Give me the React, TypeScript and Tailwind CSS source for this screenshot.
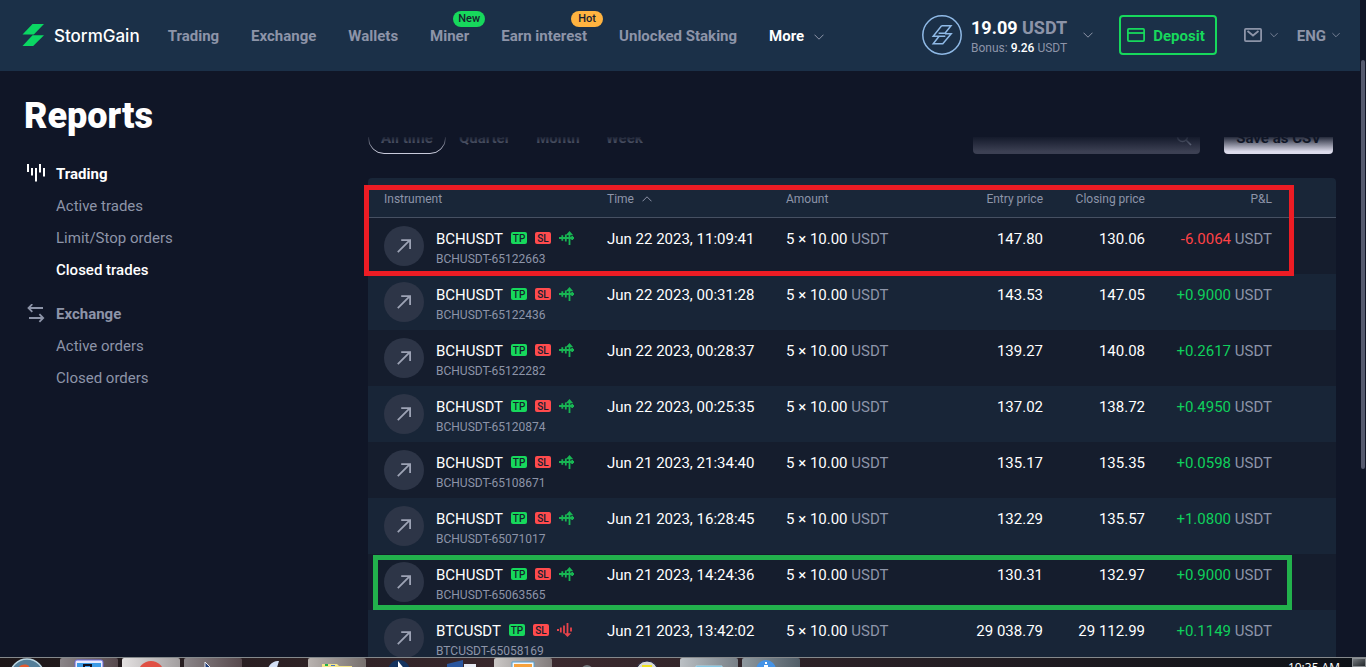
import type { ReactNode } from 'react'

interface Trade {
    symbol: string
    id: string
    side: 'long' | 'short'
    time: string
    entry: string
    closing: string
    pnl: string
}

interface NavItem {
    label: string
    badge?: string
    badgeClass?: string
}

const navItems: NavItem[] = [
    { label: 'Trading' },
    { label: 'Exchange' },
    { label: 'Wallets' },
    { label: 'Miner', badge: 'New', badgeClass: 'bg-[#17d85c]' },
    { label: 'Earn interest', badge: 'Hot', badgeClass: 'bg-[#ffb340]' },
    { label: 'Unlocked Staking' },
]

const trades: Trade[] = [
    { symbol: 'BCHUSDT', id: 'BCHUSDT-65122663', side: 'long', time: 'Jun 22 2023, 11:09:41', entry: '147.80', closing: '130.06', pnl: '-6.0064' },
    { symbol: 'BCHUSDT', id: 'BCHUSDT-65122436', side: 'long', time: 'Jun 22 2023, 00:31:28', entry: '143.53', closing: '147.05', pnl: '+0.9000' },
    { symbol: 'BCHUSDT', id: 'BCHUSDT-65122282', side: 'long', time: 'Jun 22 2023, 00:28:37', entry: '139.27', closing: '140.08', pnl: '+0.2617' },
    { symbol: 'BCHUSDT', id: 'BCHUSDT-65120874', side: 'long', time: 'Jun 22 2023, 00:25:35', entry: '137.02', closing: '138.72', pnl: '+0.4950' },
    { symbol: 'BCHUSDT', id: 'BCHUSDT-65108671', side: 'long', time: 'Jun 21 2023, 21:34:40', entry: '135.17', closing: '135.35', pnl: '+0.0598' },
    { symbol: 'BCHUSDT', id: 'BCHUSDT-65071017', side: 'long', time: 'Jun 21 2023, 16:28:45', entry: '132.29', closing: '135.57', pnl: '+1.0800' },
    { symbol: 'BCHUSDT', id: 'BCHUSDT-65063565', side: 'long', time: 'Jun 21 2023, 14:24:36', entry: '130.31', closing: '132.97', pnl: '+0.9000' },
    { symbol: 'BTCUSDT', id: 'BTCUSDT-65058169', side: 'short', time: 'Jun 21 2023, 13:42:02', entry: '29 038.79', closing: '29 112.99', pnl: '+0.1149' },
]

function Chevron({ up = false, className = '' }: { up?: boolean; className?: string }) {
    return (
        <svg width="10" height="6" viewBox="0 0 10 6" fill="none" stroke="currentColor" className={`shrink-0 ${className}`}>
            <path d={up ? 'M.5 5.3 5 .8l4.5 4.5' : 'M.5.7 5 5.2 9.5.7'} />
        </svg>
    )
}

function Header() {
    return (
        <header className="flex h-[71px] shrink-0 items-center bg-[#1b3048] pb-px pl-[22px] pr-5 text-[15px] font-bold text-[#8d94a8]">
            <a href="#" className="mr-7 flex items-center gap-[10px] text-white">
                <svg width="22" height="22" viewBox="0 0 22 22" fill="#0bd663">
                    <path d="M10.5 0H22L11.8 10.6H.5z" />
                    <path d="M10.5 11.2H22L11.2 22H.5z" />
                </svg>
                <span className="pt-0.5 font-['Inter'] text-[17px] leading-5 font-medium">StormGain</span>
            </a>

            <nav className="flex items-center gap-8 pt-[3px] whitespace-nowrap">
                {navItems.map((item) => (
                    <a key={item.label} href="#" className="relative">
                        {item.label}
                        {item.badge && (
                            <span className={`absolute -top-[14px] -right-4 flex h-4 w-8 items-center justify-center rounded-full text-[11px] font-medium text-[#17202f] ${item.badgeClass}`}>
                                {item.badge}
                            </span>
                        )}
                    </a>
                ))}
                <button className="flex items-center gap-[10px] font-bold text-white">
                    More
                    <Chevron className="text-[#8d94a8]" />
                </button>
            </nav>

            <div className="ml-auto flex items-center whitespace-nowrap">
                <button className="flex items-center text-left">
                    <svg width="40" height="40" viewBox="0 0 40 40" fill="none" stroke="#8fb9e6" strokeWidth="1.5" className="mr-[9px]">
                        <circle cx="20" cy="20" r="19.2" />
                        <path d="M19.6 10.8H29L23 18.2h-6.4M19.6 10.8 11.2 21.2H17M23 18.8h6.2l-8.4 9.9h-9.6l5.9-7.5h6.2" />
                    </svg>
                    <span className="mr-4 flex flex-col pt-0.5">
                        <span className="text-[18px] leading-6">
                            <span className="text-white">19.09</span> USDT
                        </span>
                        <span className="text-xs font-normal">
                            Bonus: <span className="font-medium text-white">9.26</span> USDT
                        </span>
                    </span>
                    <Chevron />
                </button>
                <button className="ml-[26px] flex h-10 items-center gap-2 rounded border-2 border-[#17d85c] px-[6px] pr-[10px] font-bold text-[#17d85c]">
                    <svg width="18" height="14" viewBox="0 0 18 14" fill="none" stroke="currentColor" strokeWidth="1.8">
                        <rect x=".9" y=".9" width="16.2" height="12.2" rx="1" />
                        <path d="M1 5h16" />
                    </svg>
                    <span className="pt-0.5">Deposit</span>
                </button>
                <button aria-label="Messages" className="ml-[27px] flex items-center gap-2">
                    <svg width="18" height="14" viewBox="0 0 18 14" fill="none" stroke="currentColor" strokeWidth="1.8">
                        <rect x=".9" y=".9" width="16.2" height="12.2" rx="1" />
                        <path d="M3.5 3 9 7.5 14.5 3" />
                    </svg>
                    <Chevron className="w-2" />
                </button>
                <button className="ml-[19px] flex items-center gap-[6px] font-bold">
                    <span className="pt-0.5">ENG</span>
                    <Chevron className="w-2" />
                </button>
            </div>
        </header>
    )
}

function SideGroup({ icon, title, links, current }: { icon: ReactNode; title: string; links: string[]; current?: string }) {
    return (
        <section className="mb-3">
            <h2 className={`flex h-8 items-center gap-[10px] font-bold ${current ? 'text-white' : ''}`}>
                {icon}
                {title}
            </h2>
            <ul className="pl-[30px]">
                {links.map((link) => (
                    <li key={link} className="flex h-8 items-center">
                        <a href="#" className={link === current ? 'font-medium text-white' : ''}>{link}</a>
                    </li>
                ))}
            </ul>
        </section>
    )
}

function Sidebar() {
    return (
        <aside className="w-[342px] shrink-0 text-[15px] text-[#8d94a8]">
            <SideGroup
                title="Trading"
                links={['Active trades', 'Limit/Stop orders', 'Closed trades']}
                current="Closed trades"
                icon={
                    <svg width="20" height="20" viewBox="0 0 20 20" stroke="currentColor" strokeWidth="2">
                        <path d="M2 0v8M6 4v7.5M10 4v13.5M14 0v8.5M18 4v8.5" />
                    </svg>
                }
            />
            <SideGroup
                title="Exchange"
                links={['Active orders', 'Closed orders']}
                icon={
                    <svg width="20" height="20" viewBox="0 0 20 20" fill="none" stroke="currentColor" strokeWidth="1.8">
                        <path d="M17 4H2.5M6.3.2 2.5 4l3.8 3.8M3 14h14.5M13.4 10.2l3.8 3.8-3.8 3.8" />
                    </svg>
                }
            />
        </aside>
    )
}

function Filters() {
    return (
        <div className="relative flex h-[17px] items-end overflow-hidden text-[15px] font-bold text-[#8d94a8]">
            <button className="h-8 rounded-full border border-[#c9cbdb] px-3 font-bold">All time</button>
            <button className="ml-[13px] h-8 font-bold">Quarter</button>
            <button className="ml-[26px] h-8 font-bold">Month</button>
            <button className="ml-[26px] h-8 font-bold">Week</button>
            <div className="relative ml-auto h-8 w-[227px]">
                <input type="search" aria-label="Search" className="h-8 w-full rounded bg-[#3c4053] px-3 outline-none" />
                <svg width="16" height="16" viewBox="0 0 16 16" fill="none" stroke="#8d94a8" strokeWidth="1.6" className="absolute top-2 right-2">
                    <circle cx="6.5" cy="6.5" r="5" />
                    <path d="m10 10 5 5" />
                </svg>
            </div>
            <button className="mr-[3px] ml-6 h-8 rounded bg-[#dcdbeb] px-3 font-bold text-[#101626]">Save as CSV</button>
            <div className="pointer-events-none absolute inset-0 bg-linear-to-b from-[#101627]/90 to-transparent to-85%" />
        </div>
    )
}

function SideIcon({ side }: { side: Trade['side'] }) {
    return side === 'long' ? (
        <svg width="16" height="16" viewBox="0 0 16 16" fill="none" stroke="#18b653" strokeWidth="1.8">
            <path d="M0 8h15M3.3 5.2v5.6M6.8 4.5v7M10.5 15V4M13.2 6v4" />
            <path d="M6.8 5.2 10.5 1l3.7 4.2z" fill="#18b653" stroke="none" />
        </svg>
    ) : (
        <svg width="16" height="16" viewBox="0 0 16 16" fill="none" stroke="#e8434b" strokeWidth="1.8">
            <path d="M0 8h2M3.8 5.5v5M7 3.5v8M10.5 1v11M14 5.5v4" />
            <path d="M6.8 11.2 10.5 15l3.7-3.8z" fill="#e8434b" stroke="none" />
        </svg>
    )
}

function TradeRow({ trade }: { trade: Trade }) {
    return (
        <tr className="h-14 align-top odd:bg-[#151d2d] even:bg-[#182537]">
            <td className="pt-2 pl-4">
                <div className="flex gap-3">
                    <span className="flex h-10 w-10 items-center justify-center rounded-full bg-[#2d3547]">
                        <svg width="14" height="14" viewBox="0 0 14 14" fill="none" stroke="#9da3b5" strokeWidth="1.8">
                            <path d="M.8 13.2 12.6 1.4M4.2 1.2h8.9v8.9" />
                        </svg>
                    </span>
                    <div>
                        <div className="flex h-6 items-center gap-2">
                            <span className="pt-0.5">{trade.symbol}</span>
                            <span className="flex h-3 w-4 items-center justify-center rounded-xs bg-[#17d85c] text-[10px] font-medium text-[#151d2d]">TP</span>
                            <span className="flex h-3 w-4 items-center justify-center rounded-xs bg-[#ff4b4d] text-[10px] font-medium text-[#151d2d]">SL</span>
                            <SideIcon side={trade.side} />
                        </div>
                        <div className="pt-px text-xs text-[#8d94a8]">{trade.id}</div>
                    </div>
                </div>
            </td>
            <td className="pt-[9px] pl-4 leading-6">{trade.time}</td>
            <td className="pt-[9px] pl-4 leading-6">
                5 × 10.00 <span className="text-[#8d94a8]">USDT</span>
            </td>
            <td className="pt-[9px] pr-4 text-right leading-6">{trade.entry}</td>
            <td className="pt-[9px] pr-4 text-right leading-6">{trade.closing}</td>
            <td className="pt-[9px] pr-4 text-right leading-6 text-[#8d94a8]">
                <span className={trade.pnl.startsWith('-') ? 'text-[#ff4246]' : 'text-[#0fd05c]'}>{trade.pnl}</span> USDT
            </td>
            <td />
        </tr>
    )
}

function TradesTable() {
    return (
        <div className="relative mt-6">
            <table className="w-full table-fixed border-separate border-spacing-0 overflow-hidden rounded-t whitespace-nowrap text-[15px] text-white">
                <thead>
                    <tr className="h-10 bg-[#192638] text-xs text-[#8d94a8] *:border-b *:border-[#465062] *:p-0 *:pt-0.5 *:font-normal">
                        <th><div className="pl-4 text-left">Instrument</div></th>
                        <th className="w-[179px]">
                            <button className="flex items-center gap-2 pl-4">
                                Time
                                <Chevron up />
                            </button>
                        </th>
                        <th className="w-[140px]"><div className="pl-4 text-left">Amount</div></th>
                        <th className="w-[149px]"><div className="pr-4 text-right">Entry price</div></th>
                        <th className="w-[102px]"><div className="pr-4 text-right">Closing price</div></th>
                        <th className="w-[127px]"><div className="pr-4 text-right">P&amp;L</div></th>
                        <th className="w-12" />
                    </tr>
                </thead>
                <tbody>
                    {trades.map((trade) => (
                        <TradeRow key={trade.id} trade={trade} />
                    ))}
                </tbody>
            </table>

            {/* Marked trades */}
            <div className="pointer-events-none absolute top-[7px] right-[42px] -left-1 h-[91px] border-5 border-[#ed1c24]" />
            <div className="pointer-events-none absolute top-[377px] right-11 left-[5px] h-[55px] border-5 border-[#22b14c]" />
        </div>
    )
}

const taskIcons: { open: string; icon: ReactNode }[] = [
    {
        open: 'bg-linear-to-r from-[#8a8588] to-[#57494d]',
        icon: <><rect x="15" y="3" width="28" height="14" rx="2" fill="#e8eaff" stroke="#6a68d8" /><path d="M17 6h24v8H17z" fill="#3d9be6" /><path d="M24 12V8h7v4" fill="none" stroke="#101020" strokeWidth="2" /></>,
    },
    { open: 'bg-linear-to-r from-[#e4e1e1] to-[#a39fa0]', icon: <circle cx="29" cy="17" r="13" fill="#e05044" /> },
    {
        open: 'bg-linear-to-r from-[#8a8588] to-[#57494d]',
        icon: <path d="M21 5v14h14z" fill="#203c78" stroke="#e5e8f0" />,
    },
    { open: '', icon: <path d="M33 4c-6 0-10 3-12 10h9z" fill="#d3dff4" /> },
    {
        open: 'bg-linear-to-r from-[#b9b3b0] to-[#77706e]',
        icon: <><path d="M14 7h15l2 2h13v8H14z" fill="#f2e48b" /><path d="M17 7h3v2h-3z" fill="#22b14c" /><path d="M23 8h4v1h-4z" fill="#3d72c8" /></>,
    },
    { open: '', icon: <><circle cx="29" cy="14" r="11" fill="#14335f" /><path d="M28 4v10h8z" fill="#fff" /></> },
    { open: '', icon: <><path d="m15 7 16-4v14H15z" fill="#2a569f" /><path d="M32 7h12v10H32z" fill="#e8ecf5" /></> },
    {
        open: 'bg-linear-to-r from-[#cbc8c6] to-[#827c7c]',
        icon: <><path d="M18 5h22v12H18z" fill="#f4f7fa" stroke="#52a0d0" /><path d="M20 7h18v3H20z" fill="#f6a13b" /></>,
    },
    { open: '', icon: <circle cx="31" cy="14" r="6" fill="#747a7e" /> },
    { open: '', icon: <><circle cx="29" cy="15" r="11" fill="#d8d9d4" stroke="#1e2140" /><path d="M24 8h10v6H24z" fill="#eee21e" /></> },
    {
        open: 'bg-linear-to-r from-[#bbc0c4] to-[#788087]',
        icon: <path d="M16 9h26v8H16z" fill="#67b8dc" stroke="#a9d8ec" />,
    },
    {
        open: 'bg-linear-to-r from-[#8f999f] to-[#525e68]',
        icon: <><circle cx="24" cy="13" r="10" fill="#4593e6" /><path d="M24 5v2M22 9h3v5" stroke="#fff" strokeWidth="2" fill="none" /></>,
    },
]

function Taskbar() {
    return (
        <footer className="flex h-[10px] shrink-0 items-start overflow-hidden border-t border-[#85898c] bg-linear-to-r from-[#1d1719] via-[#3b292e] via-40% to-[#0c1117]">
            <svg width="60" height="9" viewBox="0 0 60 9" className="shrink-0">
                <circle cx="27" cy="18" r="17" fill="#547e98" stroke="#bdd7e3" strokeWidth="1.5" />
                <path d="M19 9c3-3 7-3 10-1v3H19z" fill="#e35b30" />
            </svg>
            <div className="flex gap-1">
                {taskIcons.map((task, idx) => (
                    <svg key={idx} width="58" height="9" viewBox="0 1 58 9" className={`shrink-0 rounded-t-xs ${task.open}`}>
                        {task.icon}
                    </svg>
                ))}
            </div>
            <time className="mt-0.5 mr-3 ml-auto font-['Open_Sans'] text-xs leading-4 text-white">10:35 AM</time>
            <div className="h-full w-[14px] border border-[#8a8f93] bg-linear-to-br from-[#777c80] to-[#22272b]" />
        </footer>
    )
}

export default function App() {
    return (
        <div className="flex h-screen flex-col overflow-hidden bg-[#101627] font-['Roboto',sans-serif]">
            <div className="flex min-h-0 flex-1 overflow-hidden">
                <div className="flex min-w-0 flex-1 flex-col">
                    <Header />
                    <main className="px-6">
                        {/* Title sits over the scrolled filters */}
                        <h1 className="flex h-[66px] items-end text-[36px] leading-[42px] font-black text-white">Reports</h1>
                        <div className="flex">
                            <div className="shrink-0 pt-[21px] pl-[2px]">
                                <Sidebar />
                            </div>
                            <div className="min-w-0 flex-1">
                                <Filters />
                                <TradesTable />
                            </div>
                        </div>
                    </main>
                </div>
                <div className="w-[6px] shrink-0 pt-[60px] pl-px">
                    <div className="h-[409px] w-1 rounded-full bg-[#555a6e]" />
                </div>
            </div>
            <Taskbar />
        </div>
    )
}
